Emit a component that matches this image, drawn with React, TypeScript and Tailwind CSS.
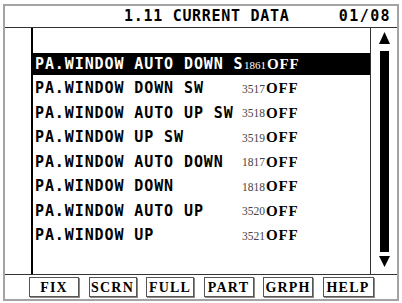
import React from 'react';

type Row = {
  label: string;
  num: string;
  active?: boolean;
};

const rows: Row[] = [
  { label: 'PA.WINDOW AUTO DOWN S', num: '1861', active: true },
  { label: 'PA.WINDOW DOWN SW', num: '3517' },
  { label: 'PA.WINDOW AUTO UP SW', num: '3518' },
  { label: 'PA.WINDOW UP SW', num: '3519' },
  { label: 'PA.WINDOW AUTO DOWN', num: '1817' },
  { label: 'PA.WINDOW DOWN', num: '1818' },
  { label: 'PA.WINDOW AUTO UP', num: '3520' },
  { label: 'PA.WINDOW UP', num: '3521' },
];

const buttons = [
  { label: 'FIX', w: 'w-[50px]' },
  { label: 'SCRN', w: 'w-[48px]' },
  { label: 'FULL', w: 'w-[48px]' },
  { label: 'PART', w: 'w-[50px]' },
  { label: 'GRPH', w: 'w-[50px]' },
  { label: 'HELP', w: 'w-[51px]' },
];

const mono = "font-['DejaVu_Sans_Mono',monospace]";
const serif = "font-['Liberation_Serif',serif]";

const DataRow = ({ label, num, active }: Row) => (
  <div
    className={
      active
        ? 'flex h-[22px] items-center bg-black pl-[2px] text-white'
        : 'flex h-[22px] items-center pl-[2px] text-black'
    }
  >
    <span
      className={`${mono} overflow-hidden whitespace-nowrap text-[15px] font-bold tracking-[0.9px] ${
        active ? 'w-[209px]' : 'w-[207px]'
      }`}
    >
      {label}
    </span>
    <span
      className={`${serif} pt-[2px] whitespace-nowrap ${
        active ? 'w-[23px] text-[11px] text-white' : 'w-[24px] text-[11.5px] text-[#444]'
      }`}
    >
      {num}
    </span>
    <span className={`${serif} text-[15px] font-bold tracking-[0.8px]`}>OFF</span>
  </div>
);

export default function App() {
  return (
    <div className="h-[303px] w-[402px] bg-white pl-[3px] pt-[4px]">
      <div className="flex h-[297px] w-[396px] flex-col border-2 border-[#a3a3a3] bg-white">
        {/* header */}
        <div className="flex h-[22px] items-center border-b border-[#333] pl-[119px] pr-[6px]">
          <span className={`${mono} text-[15px] font-bold tracking-[0.7px] text-black`}>
            1.11 CURRENT DATA
          </span>
          <span className={`${mono} ml-auto text-[15px] font-bold tracking-[1.4px] text-black`}>
            01/08
          </span>
        </div>

        {/* body */}
        <div className="flex h-[247px] border-b border-[#333]">
          <div className="w-[28px] border-r-2 border-black" />
          <div className="flex w-[338px] flex-col gap-[2.5px] border-r border-[#333] pt-[25px]">
            {rows.map((r) => (
              <DataRow key={r.label} {...r} />
            ))}
          </div>
          <div className="flex flex-1 flex-col items-center pl-[1px] pt-[4px]">
            <svg width="11" height="12" viewBox="0 0 11 12">
              <polygon points="5.5,0 11,12 0,12" fill="#000" />
            </svg>
            <div className="mt-[7px] h-[201px] w-[9px] bg-black" />
            <svg className="mt-[4px]" width="11" height="11" viewBox="0 0 11 11">
              <polygon points="0,0 11,0 5.5,11" fill="#000" />
            </svg>
          </div>
        </div>

        {/* footer */}
        <div className="flex h-[23px] items-start pl-[24px] pt-[2px]">
          <div className="flex gap-[9.5px]">
            {buttons.map((b) => (
              <div
                key={b.label}
                className={`${b.w} flex h-[20px] items-center justify-center border border-[#555] shadow-[1px_1px_0_#8a8a8a]`}
              >
                <span className={`${serif} text-[14px] font-bold tracking-[1.2px] text-black`}>
                  {b.label}
                </span>
              </div>
            ))}
          </div>
        </div>
      </div>
    </div>
  );
}
